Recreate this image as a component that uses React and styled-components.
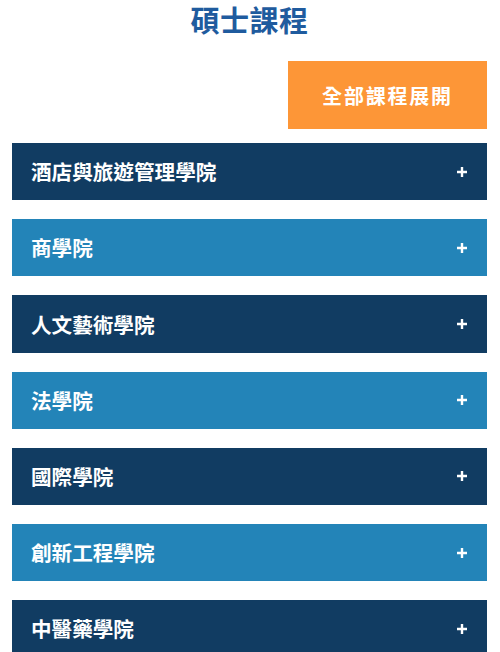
import React from 'react';
import styled, { createGlobalStyle } from 'styled-components';

const GlobalStyle = createGlobalStyle`
  html, body {
    margin: 0;
    padding: 0;
    background: #ffffff;
  }
  body {
    font-family: "Noto Sans CJK TC", "Noto Sans", sans-serif;
  }
`;

const Page = styled.div`
  padding: 0 13px 0 12px;
  display: flex;
  flex-direction: column;
`;

const Title = styled.h1`
  margin: 0;
  padding-top: 2px;
  font-size: 29px;
  line-height: 35px;
  font-weight: 700;
  text-align: center;
  color: #1f5b9e;
  letter-spacing: 0.5px;
`;

const Toolbar = styled.div`
  display: flex;
  justify-content: flex-end;
  margin-top: 24px;
`;

const ExpandButton = styled.button`
  width: 199px;
  height: 68px;
  border: none;
  background: #fd9637;
  color: #ffffff;
  font-family: inherit;
  font-size: 20px;
  font-weight: 700;
  letter-spacing: 1.8px;
  cursor: pointer;
`;

const List = styled.div`
  display: flex;
  flex-direction: column;
  gap: 19px;
  margin-top: 14px;
`;

const Row = styled.div`
  height: 57.2px;
  display: flex;
  align-items: center;
  justify-content: space-between;
  padding: 0 20px 0 19px;
  background: ${(p) => (p.$dark ? '#113c62' : '#2384b8')};
  color: #ffffff;
  cursor: pointer;
`;

const RowLabel = styled.span`
  font-size: 20.6px;
  font-weight: 700;
  line-height: 1;
`;

const Plus = () => (
  <svg width="10" height="10" viewBox="0 0 10 10">
    <path d="M5 0v10M0 5h10" stroke="#fff" strokeWidth="2.4" />
  </svg>
);

const schools = [
  '酒店與旅遊管理學院',
  '商學院',
  '人文藝術學院',
  '法學院',
  '國際學院',
  '創新工程學院',
  '中醫藥學院',
];

export default function App() {
  return (
    <>
      <GlobalStyle />
      <Page>
        <Title>碩士課程</Title>
        <Toolbar>
          <ExpandButton>全部課程展開</ExpandButton>
        </Toolbar>
        <List>
          {schools.map((name, i) => (
            <Row key={name} $dark={i % 2 === 0}>
              <RowLabel>{name}</RowLabel>
              <Plus />
            </Row>
          ))}
        </List>
      </Page>
    </>
  );
}
